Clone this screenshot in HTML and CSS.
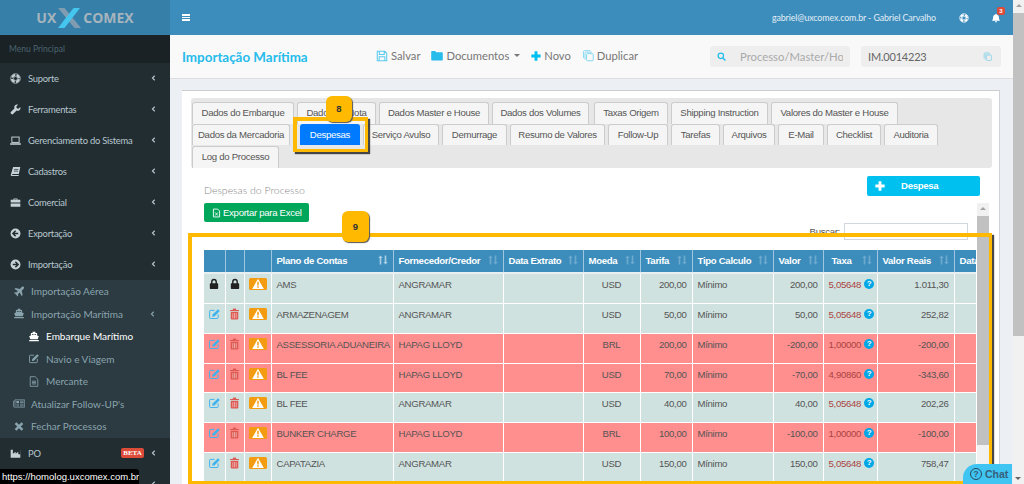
FILE: index.html
```html
<!DOCTYPE html>
<html lang="pt-BR">
<head>
<meta charset="utf-8">
<title>Importação Marítima</title>
<link rel="stylesheet" href="styles.css">
</head>
<body>
<svg class="defs" width="0" height="0" aria-hidden="true">
  <symbol id="i-ring" viewBox="0 0 16 16"><g fill="none" stroke="currentColor"><circle cx="8" cy="8" r="7"/><circle cx="8" cy="8" r="3"/><circle cx="8" cy="8" r="5" stroke-width="3" stroke-dasharray="5.9 1.95" stroke-dashoffset="-1"/></g></symbol>
  <symbol id="i-wrench" viewBox="0 0 16 16"><path fill="currentColor" d="M15 4.2l-2.7 2.6-2.5-.6-.6-2.5L11.800 1A4.200 4.200 0 0 0 6.400 6.400L1.300 11.500a1.600 1.600 0 0 0 0 2.300l.9.9a1.600 1.600 0 0 0 2.300 0l5.100-5.100A4.200 4.200 0 0 0 15 4.200z"/></symbol>
  <symbol id="i-laptop" viewBox="0 0 16 16"><rect x="2.700" y="3" width="10.600" height="7.800" fill="none" stroke="currentColor" stroke-width="1.400"/><rect y="12" width="16" height="2" rx=".7" fill="currentColor"/></symbol>
  <symbol id="i-book" viewBox="0 0 16 16"><path fill="currentColor" d="M4.500 1.500H15l-2.200 10.200H3.600L3 13h9.800l-.3 1.500H2.200c-.9 0-1.200-.8-1-1.700z"/><path stroke="#222d32" d="M6 5h6M5.600 7.500h6"/></symbol>
  <symbol id="i-case" viewBox="0 0 16 16"><path fill="currentColor" d="M5 4V2.800C5 2.300 5.400 2 5.800 2h4.400c.4 0 .8.300.8.800V4h3.600c.2 0 .4.200.4.400V8H1V4.400c0-.2.200-.4.400-.4zm1.200 0h3.600V3.200H6.200zM1 9.300h14V14H1z"/></symbol>
  <symbol id="i-left" viewBox="0 0 16 16"><circle cx="8" cy="8" r="7.200" fill="currentColor"/><path fill="none" stroke="#222d32" stroke-width="2.200" d="M8.200 3.900L4.200 8l4 4.100M4.500 8h7.500"/></symbol>
  <symbol id="i-right" viewBox="0 0 16 16"><circle cx="8" cy="8" r="7.200" fill="currentColor"/><path fill="none" stroke="#222d32" stroke-width="2.200" d="M7.800 3.900l4 4.100-4 4.100M11.500 8H4"/></symbol>
  <symbol id="i-plane" viewBox="0 0 16 16"><path fill="currentColor" d="M14.800 1.200c-.9-.8-2.200-.5-3 .3L9.200 4.200 3 2.800 1.400 4.400l5 2.700L4 9.500 1.900 9.200.8 10.300l3 1.900 1.900 3 1.100-1.100-.3-2.100L9 9.600l2.700 5 1.600-1.600-1.400-6.200 2.700-2.600c.8-.8 1.100-2.100.2-3z"/></symbol>
  <symbol id="i-ship" viewBox="0 0 16 16"><path fill="currentColor" d="M6 1h4v2h2.500v3.500L15 7.600 13.300 12H2.700L1 7.600l2.500-1.100V3H6zM5 4.500v1.400L8 4.700l3 1.200V4.500zM1 13h14v2H1z"/></symbol>
  <symbol id="i-edit" viewBox="0 0 16 16"><path fill="none" stroke="currentColor" stroke-width="1.300" d="M8 3.200H2.500a1 1 0 0 0-1 1v8.800a1 1 0 0 0 1 1h9.300a1 1 0 0 0 1-1V8.500"/><path fill="currentColor" d="M5.500 8.800L12.600 1.700 15 4.100 7.900 11.200l-3 .6z"/></symbol>
  <symbol id="i-file" viewBox="0 0 16 16"><path fill="none" stroke="currentColor" stroke-width="1.200" d="M2.500 1h7.200l3.800 3.800V15h-11zM5 7.500h6M5 9.500h6M5 11.500h6"/></symbol>
  <symbol id="i-news" viewBox="0 0 18 14"><path fill="none" stroke="currentColor" stroke-width="1.100" d="M3 1.500h14.500V12.500H2a1.300 1.300 0 0 1-1.300-1.300V3.500H3zM3 3.500v8M10.500 3.500h5.500M10.500 5.500h5.500M10.500 8h5.500M10.500 10.500h5.500M5 8h4M5 10.500h4"/><rect x="5" y="3.200" width="4" height="3" fill="currentColor"/></symbol>
  <symbol id="i-times" viewBox="0 0 16 16"><path fill="none" stroke="currentColor" stroke-width="3.600" d="M3 3l10 10M13 3L3 13"/></symbol>
  <symbol id="i-factory" viewBox="0 0 16 16"><path fill="currentColor" d="M1 2.500h3.200v6l4-3v3l3.800-3v3.500h2.800V3H15v11H1z"/></symbol>
  <symbol id="i-save" viewBox="0 0 16 16"><path fill="none" stroke="currentColor" stroke-width="1.400" d="M1.700 1.700h10l2.600 2.600v10H1.700zM4.500 2v4h6.500V2M4.200 14V9h7.600v5"/></symbol>
  <symbol id="i-folder" viewBox="0 0 16 14"><path fill="currentColor" d="M1.200 1h4.300L7 2.800h7.800c.5 0 .9.400.9.900v8.900c0 .5-.4.900-.9.900H1.200c-.5 0-.9-.4-.9-.9V1.900c0-.5.400-.9.900-.9z"/></symbol>
  <symbol id="i-plus" viewBox="0 0 14 14"><path fill="currentColor" d="M5 .5h4V5h4.500v4H9v4.500H5V9H.5V5H5z"/></symbol>
  <symbol id="i-copy" viewBox="0 0 16 16"><path fill="none" stroke="currentColor" stroke-width="1.100" d="M2 11.500V3a1.500 1.500 0 0 1 1.500-1.500H11M4 13.500V5a1.500 1.500 0 0 1 1.500-1.500H13"/><rect x="6" y="5.500" width="9" height="9.500" rx="1.300" fill="none" stroke="currentColor" stroke-width="1.200"/></symbol>
  <symbol id="i-search" viewBox="0 0 16 16"><circle cx="6.800" cy="6.800" r="4.800" fill="none" stroke="currentColor" stroke-width="2.200"/><path stroke="currentColor" stroke-width="2.600" d="M10.500 10.500l4.500 4.500"/></symbol>
  <symbol id="i-bell" viewBox="0 0 16 16"><path fill="currentColor" d="M8 1a1 1 0 0 1 1 1v.3c2.400.5 3.700 2.300 3.700 4.700 0 3 .8 3.800 2.100 5.200H1.200C2.500 10.800 3.300 10 3.300 7c0-2.400 1.300-4.200 3.700-4.700V2a1 1 0 0 1 1-1zM6.200 13.300h3.600a1.800 1.800 0 0 1-3.600 0z"/></symbol>
  <symbol id="i-lock" viewBox="0 0 12 14"><path fill="currentColor" d="M2.500 6V4.300a3.500 3.500 0 0 1 7 0V6h.7c.5 0 .8.300.8.800v5.400c0 .5-.3.800-.8.800H1.800c-.5 0-.8-.3-.8-.8V6.800c0-.5.300-.8.800-.8zm1.700 0h3.600V4.300a1.800 1.800 0 0 0-3.600 0z"/></symbol>
  <symbol id="i-trash" viewBox="0 0 12 14"><path fill="currentColor" d="M4 1.500C4 .9 4.400.500 5 .500h2c.6 0 1 .4 1 1V2.300h3.200v1.300H.8V2.300H4zM1.600 4.400h8.800V12.500c0 .6-.4 1-1 1H2.600c-.6 0-1-.4-1-1z"/><path stroke="#fff" stroke-opacity=".55" d="M4 6v6M6 6v6M8 6v6"/></symbol>
  <symbol id="i-warn" viewBox="0 0 18 12" preserveAspectRatio="none"><rect width="18" height="12" rx="1.500" fill="#f39c12"/><path fill="#fff" d="M9 .8l5.800 10.200H3.200z"/><path stroke="#f39c12" stroke-width="1.500" d="M9 3.800v3.700M9 8.200v1.500"/></symbol>
  <symbol id="i-sort" viewBox="0 0 12 11"><path fill="currentColor" d="M3 0l2.700 3H4v8H2V3H.3zM9 11L6.300 8H8V0h2v8h1.700z"/></symbol>
  <symbol id="i-chev" viewBox="0 0 6 8"><path fill="none" stroke="currentColor" stroke-width="1.500" d="M4.600 1L1.600 4l3 3"/></symbol>
</svg>

<div class="app">
  <aside class="sidebar">
    <div class="logo">
      <span>UX</span>
      <svg class="logo-x" viewBox="0 0 23 20"><path fill="#7f9cb0" d="M0 0h6.500L23 20h-6.500z"/><path fill="#45c6ef" d="M22 0h-6.500L0 20h6.500z"/></svg>
      <span>COMEX</span>
    </div>
    <div class="menu-title">Menu Principal</div>
    <nav class="menu">
      <a class="item"><svg class="ic"><use href="#i-ring"/></svg><span>Suporte</span><svg class="chev"><use href="#i-chev"/></svg></a>
      <a class="item"><svg class="ic"><use href="#i-wrench"/></svg><span>Ferramentas</span><svg class="chev"><use href="#i-chev"/></svg></a>
      <a class="item"><svg class="ic"><use href="#i-laptop"/></svg><span>Gerenciamento do Sistema</span><svg class="chev"><use href="#i-chev"/></svg></a>
      <a class="item"><svg class="ic"><use href="#i-book"/></svg><span>Cadastros</span><svg class="chev"><use href="#i-chev"/></svg></a>
      <a class="item"><svg class="ic"><use href="#i-case"/></svg><span>Comercial</span><svg class="chev"><use href="#i-chev"/></svg></a>
      <a class="item"><svg class="ic"><use href="#i-left"/></svg><span>Exportação</span><svg class="chev"><use href="#i-chev"/></svg></a>
      <a class="item"><svg class="ic"><use href="#i-right"/></svg><span>Importação</span><svg class="chev"><use href="#i-chev"/></svg></a>
    </nav>
    <div class="submenu">
      <a class="sub"><svg class="ic"><use href="#i-plane"/></svg><span>Importação Aérea</span></a>
      <a class="sub"><svg class="ic"><use href="#i-ship"/></svg><span>Importação Marítima</span><svg class="chev"><use href="#i-chev"/></svg></a>
      <a class="sub sub2 active"><svg class="ic"><use href="#i-ship"/></svg><span>Embarque Marítimo</span></a>
      <a class="sub sub2"><svg class="ic"><use href="#i-edit"/></svg><span>Navio e Viagem</span></a>
      <a class="sub sub2"><svg class="ic"><use href="#i-file"/></svg><span>Mercante</span></a>
      <a class="sub"><svg class="ic"><use href="#i-news"/></svg><span>Atualizar Follow-UP's</span></a>
      <a class="sub"><svg class="ic"><use href="#i-times"/></svg><span>Fechar Processos</span></a>
    </div>
    <nav class="menu">
      <a class="item"><svg class="ic"><use href="#i-factory"/></svg><span>PO</span><b class="beta">BETA</b><svg class="chev"><use href="#i-chev"/></svg></a>
      <a class="item"><svg class="ic"><use href="#i-case"/></svg><span></span><svg class="chev"><use href="#i-chev"/></svg></a>
    </nav>
  </aside>

  <div class="main">
    <header class="topbar">
      <div class="burger"><i></i><i></i><i></i></div>
      <div class="user">gabriel@uxcomex.com.br - Gabriel Carvalho</div>
      <svg class="top-ring"><use href="#i-ring"/></svg>
      <div class="bell"><svg><use href="#i-bell"/></svg><b>3</b></div>
    </header>

    <section class="pagehead">
      <h1>Importação Marítima</h1>
      <div class="tools">
        <a class="tool"><svg class="t-save"><use href="#i-save"/></svg>Salvar</a>
        <a class="tool"><svg class="t-folder"><use href="#i-folder"/></svg>Documentos<i class="caret"></i></a>
        <a class="tool"><svg class="t-plus"><use href="#i-plus"/></svg>Novo</a>
        <a class="tool"><svg class="t-copy"><use href="#i-copy"/></svg>Duplicar</a>
      </div>
      <div class="fields">
        <div class="field search"><svg><use href="#i-search"/></svg><span>Processo/Master/House</span></div>
        <div class="field proc"><span>IM.0014223</span><svg><use href="#i-copy"/></svg></div>
      </div>
    </section>

    <section class="content">
      <div class="box">
        <div class="tabs">
          <div class="tabrow">
            <a class="tab w1">Dados do Embarque</a><a class="tab w2">Dados da Nota</a><a class="tab w3">Dados Master e House</a><a class="tab w4">Dados dos Volumes</a><a class="tab w5">Taxas Origem</a><a class="tab w6">Shipping Instruction</a><a class="tab w7">Valores do Master e House</a>
          </div>
          <div class="tabrow">
            <a class="tab w8">Dados da Mercadoria</a><a class="tab current w9">Despesas</a><a class="tab w10">Serviço Avulso</a><a class="tab w11">Demurrage</a><a class="tab w12">Resumo de Valores</a><a class="tab w13">Follow-Up</a><a class="tab w14">Tarefas</a><a class="tab w15">Arquivos</a><a class="tab w16">E-Mail</a><a class="tab w17">Checklist</a><a class="tab w18">Auditoria</a>
          </div>
          <div class="tabrow last">
            <a class="tab w19">Log do Processo</a>
          </div>
        </div>

        <div class="section-head">
          <h2>Despesas do Processo</h2>
          <a class="btn-add"><svg><use href="#i-plus"/></svg><span>Despesa</span></a>
        </div>

        <div class="pane">
          <div class="pane-body">
            <a class="btn-excel"><svg viewBox="0 0 16 16"><path fill="none" stroke="currentColor" stroke-width="1.600" d="M2.500 1h7.500l3.500 3.500V15h-11z"/><path stroke="currentColor" stroke-width="1.500" d="M5.500 7l5 5.500M10.500 7l-5 5.500"/></svg>Exportar para Excel</a>
            <div class="filter"><label>Buscar:</label><span class="filter-input"></span></div>
            <div class="tablewrap">
              <table>
                <colgroup><col class="c1"><col class="c2"><col class="c3"><col class="c4"><col class="c5"><col class="c6"><col class="c7"><col class="c8"><col class="c9"><col class="c10"><col class="c11"><col class="c12"><col class="c13"></colgroup>
                <thead>
                  <tr>
                    <th></th><th></th><th></th>
                    <th>Plano de Contas<svg class="sort on"><use href="#i-sort"/></svg></th>
                    <th>Fornecedor/Credor<svg class="sort"><use href="#i-sort"/></svg></th>
                    <th>Data Extrato<svg class="sort"><use href="#i-sort"/></svg></th>
                    <th>Moeda<svg class="sort"><use href="#i-sort"/></svg></th>
                    <th>Tarifa<svg class="sort"><use href="#i-sort"/></svg></th>
                    <th>Tipo Calculo<svg class="sort"><use href="#i-sort"/></svg></th>
                    <th>Valor<svg class="sort"><use href="#i-sort"/></svg></th>
                    <th class="indent">Taxa<svg class="sort"><use href="#i-sort"/></svg></th>
                    <th>Valor Reais<svg class="sort"><use href="#i-sort"/></svg></th>
                    <th>Data</th>
                  </tr>
                </thead>
                <tbody>
                  <tr class="ok"><td class="ico"><svg class="lock"><use href="#i-lock"/></svg></td><td class="ico"><svg class="lock"><use href="#i-lock"/></svg></td><td class="ico"><svg class="warn"><use href="#i-warn"/></svg></td><td>AMS</td><td>ANGRAMAR</td><td></td><td class="ctr">USD</td><td class="num">200,00</td><td>Mínimo</td><td class="num">200,00</td><td class="tax">5,05648<i class="help">?</i></td><td class="num">1.011,30</td><td></td></tr>
                  <tr class="ok"><td class="ico"><svg class="edit"><use href="#i-edit"/></svg></td><td class="ico"><svg class="trash"><use href="#i-trash"/></svg></td><td class="ico"><svg class="warn"><use href="#i-warn"/></svg></td><td>ARMAZENAGEM</td><td>ANGRAMAR</td><td></td><td class="ctr">USD</td><td class="num">50,00</td><td>Mínimo</td><td class="num">50,00</td><td class="tax">5,05648<i class="help">?</i></td><td class="num">252,82</td><td></td></tr>
                  <tr class="bad"><td class="ico"><svg class="edit"><use href="#i-edit"/></svg></td><td class="ico"><svg class="trash"><use href="#i-trash"/></svg></td><td class="ico"><svg class="warn"><use href="#i-warn"/></svg></td><td>ASSESSORIA ADUANEIRA</td><td>HAPAG LLOYD</td><td></td><td class="ctr">BRL</td><td class="num">200,00</td><td>Mínimo</td><td class="num">-200,00</td><td class="tax">1,00000<i class="help">?</i></td><td class="num">-200,00</td><td></td></tr>
                  <tr class="bad short"><td class="ico"><svg class="edit"><use href="#i-edit"/></svg></td><td class="ico"><svg class="trash"><use href="#i-trash"/></svg></td><td class="ico"><svg class="warn"><use href="#i-warn"/></svg></td><td>BL FEE</td><td>HAPAG LLOYD</td><td></td><td class="ctr">USD</td><td class="num">70,00</td><td>Mínimo</td><td class="num">-70,00</td><td class="tax">4,90860<i class="help">?</i></td><td class="num">-343,60</td><td></td></tr>
                  <tr class="ok"><td class="ico"><svg class="edit"><use href="#i-edit"/></svg></td><td class="ico"><svg class="trash"><use href="#i-trash"/></svg></td><td class="ico"><svg class="warn"><use href="#i-warn"/></svg></td><td>BL FEE</td><td>ANGRAMAR</td><td></td><td class="ctr">USD</td><td class="num">40,00</td><td>Mínimo</td><td class="num">40,00</td><td class="tax">5,05648<i class="help">?</i></td><td class="num">202,26</td><td></td></tr>
                  <tr class="bad"><td class="ico"><svg class="edit"><use href="#i-edit"/></svg></td><td class="ico"><svg class="trash"><use href="#i-trash"/></svg></td><td class="ico"><svg class="warn"><use href="#i-warn"/></svg></td><td>BUNKER CHARGE</td><td>HAPAG LLOYD</td><td></td><td class="ctr">BRL</td><td class="num">100,00</td><td>Mínimo</td><td class="num">-100,00</td><td class="tax">1,00000<i class="help">?</i></td><td class="num">-100,00</td><td></td></tr>
                  <tr class="ok short"><td class="ico"><svg class="edit"><use href="#i-edit"/></svg></td><td class="ico"><svg class="trash"><use href="#i-trash"/></svg></td><td class="ico"><svg class="warn"><use href="#i-warn"/></svg></td><td>CAPATAZIA</td><td>ANGRAMAR</td><td></td><td class="ctr">USD</td><td class="num">150,00</td><td>Mínimo</td><td class="num">150,00</td><td class="tax">5,05648<i class="help">?</i></td><td class="num">758,47</td><td></td></tr>
                </tbody>
              </table>
            </div>
          </div>
          <div class="inner-scroll"><i class="arrow"></i><i class="thumb"></i></div>
        </div>
      </div>
    </section>
  </div>

  <div class="page-scroll"><i class="arrow"></i><i class="thumb"></i></div>
</div>

<div class="mark mark-tab"></div>
<div class="mark mark-table"></div>
<div class="badge badge-8">8</div>
<div class="badge badge-9">9</div>
<div class="chat"><i>?</i><span>Chat</span></div>
<i class="scroll-down"></i>
<div class="status">https://homolog.uxcomex.com.br</div>
</body>
</html>
```
FILE: styles.css
```css
* { box-sizing: border-box; }
html, body { margin: 0; height: 484px; overflow: hidden; }
body { position: relative; width: 1024px; font-family: "Liberation Sans", Arial, sans-serif; background: #ecf0f5; }
a { text-decoration: none; color: inherit; }
svg { display: block; }
.defs { position: absolute; }
.app { display: flex; height: 484px; }

/* sidebar */
.sidebar { width: 170px; flex: none; background: #222d32; font-family: Lato, sans-serif; overflow: hidden; }
.logo { height: 35px; background: #367fa9; display: flex; align-items: center; justify-content: center; gap: 2px; color: #a6b4bd; font: 700 14px "Open Sans", sans-serif; }
.logo-x { width: 23px; height: 20px; }
.menu-title { height: 28px; background: #1a2226; color: #4b646f; font-size: 8.500px; padding: 8px 0 0 9px; line-height: 13px; }
.item { height: 31px; display: flex; align-items: center; padding-left: 10px; color: #b8c7ce; font-size: 9.400px; letter-spacing: -.25px; position: relative; }
.item .ic { width: 11px; height: 11px; margin-right: 7px; flex: none; color: #c5d2d8; }
.chev { width: 5px; height: 6px; color: #b8c7ce; position: absolute; right: 14px; top: 12px; }
.submenu { background: #2c3b41; height: 158px; }
.sub { height: 22.500px; display: flex; align-items: center; padding-left: 13px; color: #8aa4af; font-size: 10px; position: relative; }
.sub .ic { width: 12px; height: 11px; margin-right: 6px; flex: none; }
.sub .chev { color: #8aa4af; top: 8px; right: 15px; }
.sub2 { padding-left: 28px; }
.sub2 .ic { margin-right: 6px; }
.sub.active { color: #fff; }
.beta { position: absolute; right: 26px; top: 10px; background: #dd4b39; color: #fff; font: 700 7px "Liberation Serif", serif; letter-spacing: 0; padding: 1px 0; border-radius: 2px; line-height: 8px; width: 23px; text-align: center; }

/* top */
.main { flex: 1; min-width: 0; display: flex; flex-direction: column; }
.topbar { height: 35px; background: #3c8dbc; display: flex; align-items: center; color: #fff; padding-left: 12px; flex: none; }
.burger { width: 8px; display: flex; flex-direction: column; gap: 1px; margin-right: 582px; }
.burger i { height: 1.500px; background: #fff; display: block; }
.user { width: 165px; font: 8.800px Lato, sans-serif; letter-spacing: -.1px; white-space: nowrap; color: #e3eef5; }
.top-ring { width: 10px; height: 10px; margin-left: 22px; color: #fff; }
.bell { width: 9px; height: 10px; margin-left: 22px; position: relative; }
.bell svg { width: 10px; height: 10px; }
.bell b { position: absolute; left: 6px; top: -6px; width: 8px; height: 8px; background: #dd4b39; border-radius: 2px; font: 700 6px/8px "Liberation Sans", sans-serif; text-align: center; }
.page-scroll { width: 11px; flex: none; background: #f1f1f1; display: flex; flex-direction: column; align-items: center; }
.page-scroll .arrow, .inner-scroll .arrow { width: 0; height: 0; border: 3px solid transparent; border-top: 0; border-bottom: 3px solid #a3a3a3; margin-top: 4px; display: block; }
.page-scroll .thumb { display: block; width: 100%; height: 323px; background: #c1c1c1; margin-top: 6px; }

.pagehead { height: 44px; flex: none; background: #f9f9f9; border-bottom: 1px solid #ddd; display: flex; align-items: center; padding: 0 12px; }
.pagehead h1 { margin: 0; width: 194px; flex: none; font: 700 13.400px Lato, sans-serif; color: #26bcec; white-space: nowrap; }
.tools { display: flex; align-items: center; gap: 11px; width: 334px; flex: none; font: 11.200px Lato, sans-serif; color: #777; padding-bottom: 2px; }
.tool { display: flex; align-items: center; white-space: nowrap; }
.tool svg { color: #26bcec; margin-right: 3px; }
.t-save { width: 12px; height: 12px; opacity: .75; }
.t-folder { width: 12px; height: 11px; }
.t-plus { width: 10px; height: 10px; color: #00c0ef !important; }
.t-copy { width: 12px; height: 13px; opacity: .6; }
.caret { width: 0; height: 0; border: 3px solid transparent; border-bottom: 0; border-top: 3px solid #777; margin-left: 5px; }
.fields { display: flex; gap: 11px; }
.field { width: 140px; height: 21px; background: #eee; border-radius: 3px; display: flex; align-items: center; font: 11.300px Lato, sans-serif; color: #666; overflow: hidden; white-space: nowrap; }
.field svg { color: #26bcec; flex: none; }
.search svg { width: 9px; height: 9px; margin: 0 14px 0 7px; }
.search span { color: #aaa; width: 103px; overflow: hidden; }
.proc { padding-left: 7px; justify-content: space-between; padding-right: 9px; letter-spacing: -.2px; font-size: 11px; }
.proc svg { width: 9px; height: 9px; opacity: .6; }

/* box */
.content { flex: 1; min-height: 0; padding: 11px 12px 0; }
.box { width: 818px; height: 100%; background: #fff; border-top: 1px solid #ccc; border-right: 1px solid #cfd3d8; padding: 7px 7px 0 9px; overflow: hidden; }
.tabs { height: 70px; background: #e7e7e7; border-radius: 3px; padding: 4px 0 0 1px; }
.tabrow { display: flex; gap: 3px; height: 21.500px; }
.tabrow.last { margin-top: 1px; }
.tab { display: block; height: 21.500px; background: #f5f5f5; border: 1px solid #ccc; border-bottom: 0; border-radius: 3px 3px 0 0; font-size: 9.600px; letter-spacing: -.3px; color: #555; line-height: 18px; padding-top: 1px; text-align: center; white-space: nowrap; }
.tab.current { background: #007bff; color: #fff; border-color: #007bff; height: 21px; }
.w1 { width: 102px; } .w2 { width: 79px; } .w3 { width: 110px; } .w4 { width: 97px; } .w5 { width: 74px; margin-left: 2px; } .w6 { width: 97px; } .w7 { width: 127px; }
.w8 { width: 98px; margin-right: 7px; } .w9 { width: 60px; } .w10 { width: 76px; } .w11 { width: 65px; } .w12 { width: 95px; } .w13 { width: 60px; } .w14 { width: 49px; } .w15 { width: 52px; } .w16 { width: 46px; } .w17 { width: 54px; } .w18 { width: 54px; }
.w19 { width: 87px; }
.section-head { display: flex; justify-content: space-between; align-items: center; height: 35px; padding: 0 12px 0 13px; }
.section-head h2 { margin: 8px 0 0; font: 300 10.500px Lato, sans-serif; color: #888; }
.btn-add { width: 113px; height: 20px; background: #00c0ef; color: #fff; border-radius: 2px; display: flex; align-items: center; font-size: 9.600px; letter-spacing: -.3px; font-weight: 700; padding-left: 8px; }
.btn-add svg { width: 10px; height: 10px; margin-right: 16px; }
.pane { display: flex; padding-left: 13px; }
.pane-body { width: 772px; flex: none; position: relative; }
.btn-excel { width: 105px; height: 19px; background: #00a65a; border-radius: 2px; color: #fff; font-size: 9.600px; letter-spacing: -.3px; display: flex; align-items: center; padding-left: 8px; white-space: nowrap; }
.btn-excel svg { width: 9px; height: 10px; margin-right: 2px; }
.filter { display: flex; justify-content: flex-end; padding-right: 8px; margin-top: 1px; height: 17px; align-items: flex-start; font-size: 9.600px; letter-spacing: -.3px; color: #555; }
.filter label { margin: 3px 4px 0 0; }
.filter-input { width: 124px; height: 17px; border: 1px solid #d2d6de; background: #fff; }
.tablewrap { width: 772px; overflow: hidden; margin-top: 10px; }
table { border-collapse: collapse; table-layout: fixed; width: 792px; font-size: 9.600px; letter-spacing: -.3px; color: #555; }
.c1 { width: 21px; } .c2 { width: 19px; } .c3 { width: 27px; } .c4 { width: 122px; } .c5 { width: 110px; } .c6 { width: 80px; } .c7 { width: 57px; } .c8 { width: 52px; } .c9 { width: 81px; } .c10 { width: 50px; } .c11 { width: 54px; } .c12 { width: 77px; } .c13 { width: 92px; }
th { height: 23px; background: #3c8dbc; color: #fff; font-weight: 700; text-align: left; padding: 0 5px 2px; border-right: 1px solid #9fc6de; border-bottom: 2px solid #e8eff0; position: relative; white-space: nowrap; overflow: hidden; }
th.indent { padding-left: 8px; }
.sort { position: absolute; right: 5px; top: 5px; width: 10px; height: 10px; color: #6ea9cf; }
.sort.on { color: #a9cfe6; }
td { height: 30px; padding: 5px 5px 0; vertical-align: top; border-right: 1px solid rgba(255,255,255,.55); border-bottom: 1px solid rgba(255,255,255,.7); line-height: 11px; white-space: nowrap; overflow: hidden; }
.short td { height: 29px; }
.ok td { background: #cfe2e0; }
.bad td { background: #ff8e8e; }
.ctr { text-align: center; }
.num { text-align: right; }
.ico { padding: 4px 0 0; }
.ico svg { margin: 0 auto; }
.lock { width: 10px; height: 12px; color: #222; }
.edit { width: 13px; height: 12px; color: #3fb2ec; }
.trash { width: 11px; height: 12px; color: #dd5a52; }
.warn { width: 18px; height: 12px; }
.tax { color: #a94442; padding-right: 0; }
.help { display: inline-block; width: 10px; height: 10px; border-radius: 50%; background: #00a7e6; color: #fff; font: 700 8px/10px "Liberation Sans", sans-serif; letter-spacing: 0; text-align: center; margin-left: 3px; vertical-align: top; }
.inner-scroll { width: 12px; height: 300px; background: #f1f1f1; flex: none; display: flex; flex-direction: column; align-items: center; margin-left: 1px; }
.inner-scroll .thumb { display: block; width: 100%; height: 229px; background: #c1c1c1; margin-top: 6px; }

/* annotations */
.mark { position: absolute; border-style: solid; border-color: #ffb900; border-width: 4px 3px 3px 4px; box-shadow: 2px 2px 1px rgba(40,40,40,.85); pointer-events: none; }
.mark-tab { left: 293px; top: 117px; width: 75px; height: 35px; }
.mark-table { left: 188px; top: 233px; width: 804px; height: 251px; }
.badge { position: absolute; background: #ffb900; border-radius: 6px; box-shadow: 1px 1px 1px #555; font: 700 9.500px "Liberation Sans", sans-serif; color: #333; text-align: center; }
.badge-8 { left: 326px; top: 96px; width: 26px; height: 26px; line-height: 26px; }
.badge-9 { left: 342px; top: 211px; width: 27px; height: 31px; line-height: 31px; }
.chat { position: absolute; left: 963px; top: 464px; width: 49px; height: 20px; background: #40c4f2; border-radius: 14px 0 0 0; display: flex; align-items: center; padding-left: 7px; color: #36607a; font: 700 10.500px "Liberation Sans", sans-serif; gap: 3px; }
.chat i { width: 12px; height: 12px; border: 1.500px solid #27485c; border-radius: 50%; font: 700 9px/10px "Liberation Sans", sans-serif; text-align: center; }
.scroll-down { position: absolute; left: 1015px; top: 477px; width: 0; height: 0; border: 3px solid transparent; border-bottom: 0; border-top: 3px solid #666; }
.status { position: absolute; left: 0; bottom: 0; width: 139px; height: 15px; background: #000; border-radius: 0 3px 0 0; color: #fff; font-size: 9.500px; line-height: 16px; padding-left: 2px; white-space: nowrap; overflow: hidden; }
```
